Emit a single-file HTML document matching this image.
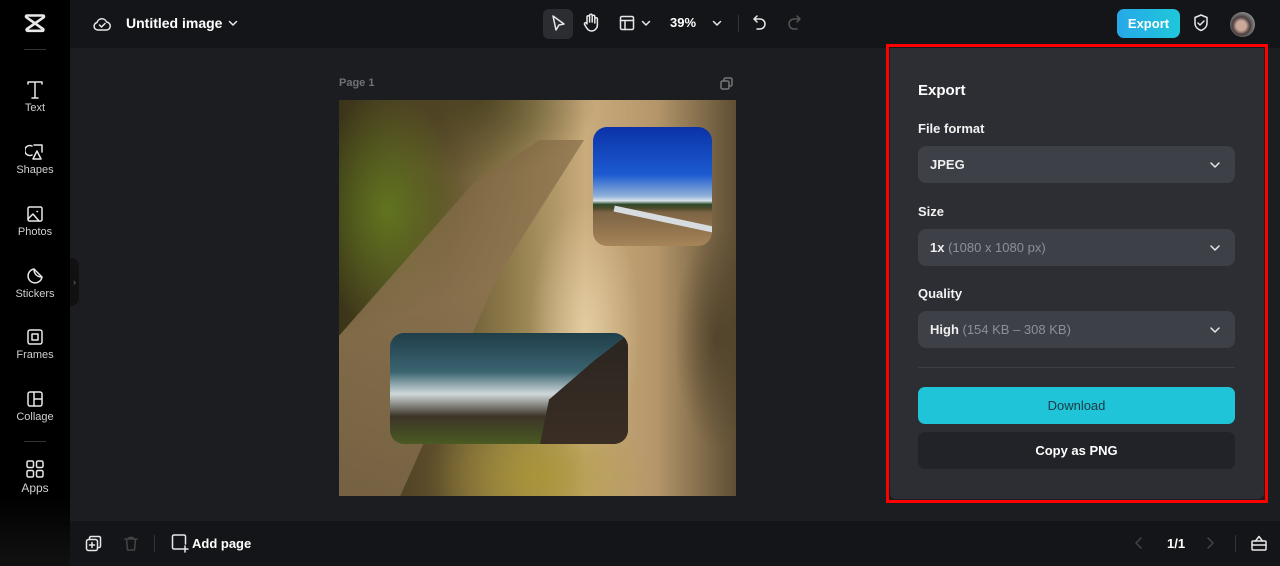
<!DOCTYPE html>
<html><head><meta charset="utf-8"><style>
*{margin:0;padding:0;box-sizing:border-box}
body{width:1280px;height:566px;overflow:hidden;background:#1c1d21;font-family:"Liberation Sans",sans-serif;color:#fff;position:relative}
.abs{position:absolute}
#side{left:0;top:0;width:70px;height:566px;background:linear-gradient(180deg,#000 0,#000 88%,#111 100%)}
#top{left:70px;top:0;width:1210px;height:48px;background:#141518}
#bot{left:70px;top:521px;width:1210px;height:45px;background:#141518}
.si{position:absolute;left:0;width:70px;text-align:center;font-size:11px;color:#cfd0d3}
.si svg{display:block;margin:0 auto 2px}
svg{fill:none;stroke:#e8e8ea;stroke-width:1.5;stroke-linecap:round;stroke-linejoin:round}
.lbl{font-size:13px;font-weight:bold;color:#f2f2f2}
.sel{position:absolute;left:918px;width:317px;height:37px;background:#3e4048;border-radius:8px;font-size:13px;font-weight:bold;padding:0 12px;line-height:37px;color:#eee}
.sel span{color:#8d8f96;font-weight:normal}
.sel svg{position:absolute;right:14px;top:13px}
</style></head><body>
<div id="side" class="abs">
 <svg class="abs" style="left:23px;top:12px" width="24" height="22" viewBox="0 0 24 22"><path d="M4 3.5h16a1 1 0 0 1 .6 1.8L4 17a1 1 0 0 0 .6 1.8H20M4 3.5a1 1 0 0 0-.6 1.8L20 17a1 1 0 0 1-.6 1.8" stroke-width="2.6"/></svg>
 <div class="abs" style="left:24px;top:49px;width:22px;height:1px;background:#333"></div>
 <div class="si" style="top:80px"><svg width="20" height="20" viewBox="0 0 20 20"><path d="M3 4V2h14v2M10 2v16M7 18h6"/></svg>Text</div>
 <div class="si" style="top:142px"><svg width="20" height="20" viewBox="0 0 20 20"><path d="M7 4a5 5 0 1 0 0 9M9 3h8v7M12 9l-4 8h8z"/></svg>Shapes</div>
 <div class="si" style="top:204px"><svg width="20" height="20" viewBox="0 0 20 20"><rect x="3" y="3" width="14" height="14" rx="1.5"/><path d="M3 15l5-5 6 7M12 7.5h.5"/></svg>Photos</div>
 <div class="si" style="top:266px"><svg width="20" height="20" viewBox="0 0 20 20"><path d="M17 11a7 7 0 1 1-8-8c0 5 3 8 8 8zM9 3l8 8"/></svg>Stickers</div>
 <div class="si" style="top:327px"><svg width="20" height="20" viewBox="0 0 20 20"><rect x="3" y="3" width="14" height="14" rx="2"/><rect x="7" y="7" width="6" height="6"/></svg>Frames</div>
 <div class="si" style="top:389px"><svg width="20" height="20" viewBox="0 0 20 20"><rect x="3" y="3" width="14" height="14" rx="2"/><path d="M9 3v14M9 10h8"/></svg>Collage</div>
 <div class="abs" style="left:24px;top:441px;width:22px;height:1px;background:#333"></div>
 <div class="si" style="top:459px;font-size:12px"><svg width="20" height="20" viewBox="0 0 20 20"><rect x="2" y="2" width="6.5" height="6.5" rx="1.5"/><rect x="11.5" y="2" width="6.5" height="6.5" rx="1.5"/><rect x="2" y="11.5" width="6.5" height="6.5" rx="1.5"/><rect x="11.5" y="11.5" width="6.5" height="6.5" rx="1.5"/></svg>Apps</div>
</div>
<div class="abs" style="left:70px;top:258px;width:9px;height:48px;background:#111;border-radius:0 8px 8px 0;color:#777;font-size:9px;line-height:48px;text-align:center">›</div>
<div id="top" class="abs">
 <svg class="abs" style="left:22px;top:14px" width="20" height="20" viewBox="0 0 20 20"><path d="M6 16h8a4 4 0 0 0 .5-8A5 5 0 0 0 5 8.5 3.8 3.8 0 0 0 6 16zM7.5 11l2 2 3.5-3.5"/></svg>
 <div class="abs" style="left:56px;top:15px;font-size:14px;font-weight:bold">Untitled image</div>
 <svg class="abs" style="left:158px;top:18px" width="10" height="10" viewBox="0 0 10 10"><path d="M1.5 3.5L5 7l3.5-3.5"/></svg>
 <div class="abs" style="left:473px;top:9px;width:30px;height:30px;background:#2c2d33;border-radius:6px"></div>
 <svg class="abs" style="left:480px;top:14px" width="18" height="20" viewBox="0 0 18 20"><path d="M3 2l11 8-5 1-3 5z"/></svg>
 <svg class="abs" style="left:512px;top:13px" width="18" height="20" viewBox="0 0 18 20"><path d="M5 11V4a1.3 1.3 0 0 1 2.6 0v5V2.5a1.3 1.3 0 0 1 2.6 0V9V3.5a1.3 1.3 0 0 1 2.6 0V10V6a1.3 1.3 0 0 1 2.6 0v6a6 6 0 0 1-6 6c-3 0-4-2-6-5l-1-2a1.2 1.2 0 0 1 2-1z"/></svg>
 <svg class="abs" style="left:549px;top:15px" width="16" height="16" viewBox="0 0 16 16"><rect x="1.5" y="1.5" width="13" height="13" rx="1.5"/><path d="M1.5 5.5h13M6 5.5v9"/></svg>
 <svg class="abs" style="left:571px;top:18px" width="10" height="10" viewBox="0 0 10 10"><path d="M1.5 3.5L5 7l3.5-3.5"/></svg>
 <div class="abs" style="left:600px;top:15px;font-size:13px;font-weight:bold">39%</div>
 <svg class="abs" style="left:642px;top:18px" width="10" height="10" viewBox="0 0 10 10"><path d="M1.5 3.5L5 7l3.5-3.5"/></svg>
 <div class="abs" style="left:668px;top:15px;width:1px;height:17px;background:#333"></div>
 <svg class="abs" style="left:682px;top:14px" width="16" height="18" viewBox="0 0 16 18"><path d="M5 2L2 5l3 3M2 5h6a5 5 0 0 1 0 10H5"/></svg>
 <svg class="abs" style="left:716px;top:14px" width="16" height="18" viewBox="0 0 16 18"><path d="M11 2l3 3-3 3M14 5H8a5 5 0 0 0 0 10h3" stroke="#555"/></svg>
 <div class="abs" style="left:1047px;top:9px;width:63px;height:29px;border-radius:7px;background:linear-gradient(90deg,#27a8e8,#1fc7da);font-size:13px;font-weight:bold;text-align:center;line-height:29px">Export</div>
 <svg class="abs" style="left:1122px;top:13px" width="18" height="20" viewBox="0 0 18 20"><path d="M9 2l6 2.5V10c0 4-3 6.5-6 7.5-3-1-6-3.5-6-7.5V4.5zM6 10l2 2 4-4"/></svg>
 <div class="abs" style="left:1160px;top:12px;width:25px;height:25px;border-radius:50%;background:radial-gradient(circle at 45% 55%,#caa89a 0 25%,#4a3e3e 45%,#888 70%,#222 100%)"></div>
</div>
<div class="abs" style="left:339px;top:77px;font-size:11px;font-weight:bold;color:#6f7178">Page 1</div>
<svg class="abs" style="left:720px;top:77px" width="13" height="13" viewBox="0 0 13 13"><rect x="1" y="4" width="8" height="8" rx="1.5" stroke="#777"/><path d="M4 4V2.5A1.5 1.5 0 0 1 5.5 1h5A1.5 1.5 0 0 1 12 2.5v5A1.5 1.5 0 0 1 10.5 9H9" stroke="#777"/></svg>
<div class="abs" style="left:339px;top:100px;width:397px;height:396px;overflow:hidden;background:linear-gradient(90deg,#3a3418 0%,#5e4e2c 25%,#94804f 45%,#c9ab7c 62%,#b4966a 80%,#5e4e34 100%)">
 <div class="abs" style="left:0;top:0;width:397px;height:396px;background:radial-gradient(ellipse 110px 170px at 12% 28%,rgba(100,125,30,.85),transparent 70%),radial-gradient(ellipse 170px 110px at 35% 0%,rgba(60,55,25,.7),transparent 70%),radial-gradient(ellipse 160px 120px at 50% 95%,rgba(170,150,50,.85),transparent 70%),radial-gradient(ellipse 80px 180px at 62% 58%,rgba(245,225,185,.6),transparent 70%),radial-gradient(ellipse 60px 160px at 95% 60%,rgba(60,50,30,.6),transparent 70%)"></div>
 <div class="abs" style="left:0;top:40px;width:245px;height:356px;background:linear-gradient(160deg,rgba(120,95,60,.55),rgba(140,115,80,.85) 45%,rgba(120,100,70,.85));clip-path:polygon(82% 0,100% 0,65% 38%,25% 100%,0 100%,0 55%,55% 12%)"></div>
 <div class="abs" style="left:254px;top:27px;width:119px;height:119px;border-radius:14px;overflow:hidden;background:linear-gradient(180deg,#0b32a8 0%,#1c5ad0 40%,#8fb0d8 58%,#d8e2ea 62%,#2c4a2a 65%,#4a4a2a 68%,#7d6445 72%,#a68458 100%)">
  <div class="abs" style="left:20px;top:90px;width:110px;height:6px;background:#d7dce0;transform:rotate(12deg)"></div>
 </div>
 <div class="abs" style="left:51px;top:233px;width:238px;height:111px;border-radius:14px;overflow:hidden;background:linear-gradient(180deg,#1f3e4a 0%,#3a6470 35%,#cfd8da 55%,#3c3428 75%,#4a5a22 100%)">
  <div class="abs" style="left:150px;top:0;width:90px;height:111px;background:linear-gradient(180deg,#2a2520,#3a2e24);clip-path:polygon(100% 0,100% 100%,0 100%,10% 60%,60% 25%)"></div>
 </div>
</div>
<div class="abs" style="left:886px;top:44px;width:382px;height:459px;border:3px solid #f00"></div>
<div class="abs" style="left:890px;top:48px;width:374px;height:451px;background:#2d2e34;border-radius:0 0 6px 6px"></div>
<div class="abs" style="left:918px;top:82px;font-size:15px;font-weight:bold">Export</div>
<div class="abs lbl" style="left:918px;top:121px">File format</div>
<div class="sel" style="top:146px">JPEG<svg width="12" height="12" viewBox="0 0 12 12"><path d="M2 4l4 4 4-4"/></svg></div>
<div class="abs lbl" style="left:918px;top:204px">Size</div>
<div class="sel" style="top:229px">1x <span>(1080 x 1080 px)</span><svg width="12" height="12" viewBox="0 0 12 12"><path d="M2 4l4 4 4-4"/></svg></div>
<div class="abs lbl" style="left:918px;top:286px">Quality</div>
<div class="sel" style="top:311px">High <span>(154 KB – 308 KB)</span><svg width="12" height="12" viewBox="0 0 12 12"><path d="M2 4l4 4 4-4"/></svg></div>
<div class="abs" style="left:918px;top:367px;width:317px;height:1px;background:#3e3f45"></div>
<div class="abs" style="left:918px;top:387px;width:317px;height:37px;background:#20c4d8;border-radius:7px;text-align:center;line-height:37px;font-size:13px;color:#1a3a44">Download</div>
<div class="abs" style="left:918px;top:432px;width:317px;height:37px;background:#222328;border-radius:7px;text-align:center;line-height:37px;font-size:13px;font-weight:bold">Copy as PNG</div>
<div id="bot" class="abs">
 <svg class="abs" style="left:15px;top:14px" width="17" height="17" viewBox="0 0 17 17"><rect x="1.5" y="4.5" width="11" height="11" rx="2"/><path d="M4.5 4.5V3a1.5 1.5 0 0 1 1.5-1.5h8A1.5 1.5 0 0 1 15.5 3v8a1.5 1.5 0 0 1-1.5 1.5h-1.5M7 7.5v5M4.5 10h5"/></svg>
 <svg class="abs" style="left:53px;top:14px" width="16" height="17" viewBox="0 0 16 17"><path d="M2 4h12M6 4V2.5h4V4M3.5 4l1 11h7l1-11" stroke="#444"/></svg>
 <div class="abs" style="left:84px;top:14px;width:1px;height:17px;background:#333"></div>
 <svg class="abs" style="left:101px;top:13px" width="18" height="19" viewBox="0 0 18 19"><path d="M10 15H3a1.5 1.5 0 0 1-1.5-1.5v-11A1.5 1.5 0 0 1 3 1h10a1.5 1.5 0 0 1 1.5 1.5V10M14 12v6M11 15h6"/></svg>
 <div class="abs" style="left:122px;top:15px;font-size:13px;font-weight:bold">Add page</div>
 <svg class="abs" style="left:1064px;top:15px" width="10" height="14" viewBox="0 0 10 14"><path d="M7 2L2 7l5 5" stroke="#444"/></svg>
 <div class="abs" style="left:1097px;top:15px;font-size:13px;font-weight:bold">1/1</div>
 <svg class="abs" style="left:1135px;top:15px" width="10" height="14" viewBox="0 0 10 14"><path d="M3 2l5 5-5 5" stroke="#444"/></svg>
 <div class="abs" style="left:1165px;top:14px;width:1px;height:17px;background:#333"></div>
 <svg class="abs" style="left:1180px;top:13px" width="18" height="18" viewBox="0 0 18 18"><rect x="2" y="7" width="14" height="9" rx="1"/><path d="M5.5 7l3.5-4.5L12.5 7M2 11h14"/></svg>
</div>
</body></html>
